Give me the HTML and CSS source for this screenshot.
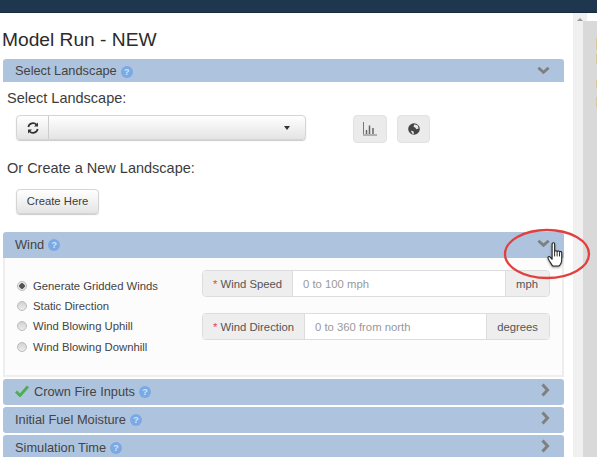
FILE: index.html
```html
<!DOCTYPE html>
<html lang="en">
<head>
    <meta charset="UTF-8">
    <title>Model Run - NEW</title>
    <link rel="stylesheet" href="styles.css">
</head>
<body>
    <div class="topbar"></div>
    <div class="layout">
        <main class="content">
            <h1>Model Run - NEW</h1>

            <div class="panel-head first">
                <span class="panel-title">Select Landscape <span class="help">?</span></span>
                <svg class="chev" width="13" height="9" viewBox="0 0 14 9"><path d="M1.500 1.500 7 6.500l5.500-5" fill="none" stroke="#7f7f7f" stroke-width="3"/></svg>
            </div>
            <div class="landscape">
                <p class="label">Select Landscape:</p>
                <div class="picker-row">
                    <div class="picker">
                        <span class="picker-refresh">
                            <svg width="12" height="12" viewBox="0 0 12 12"><path d="M1.300 5A4.800 4.800 0 0 1 9.600 2.800M10.700 7A4.800 4.800 0 0 1 2.400 9.200" fill="none" stroke="#333" stroke-width="1.700"/><path d="M11 .6V4.600H7ZM1 11.400V7.400H5Z" fill="#333"/></svg>
                        </span>
                        <span class="picker-select"><i class="caret"></i></span>
                    </div>
                    <span class="icon-btn chart-btn">
                        <svg width="14" height="14" viewBox="0 0 14 14"><path d="M.5 0V12M0 13H14" fill="none" stroke="#777" stroke-width="1"/><path d="M3.500 8V12M6.500 3.500V12M10 6V12" fill="none" stroke="#666" stroke-width="1.500"/></svg>
                    </span>
                    <span class="icon-btn globe-btn">
                        <svg width="12" height="12" viewBox="0 0 12 12"><circle cx="6" cy="6" r="5.800" fill="#444"/><path d="M6.500 1.200 9.800 2.600 10.600 5.400 8.600 6.200 7 4.400 5.400 3.600ZM2.800 7.600 5.600 8.400 6 11 4.200 10.400Z" fill="#e8e8e8"/></svg>
                    </span>
                </div>
                <p class="label second">Or Create a New Landscape:</p>
                <span class="btn">Create Here</span>
            </div>

            <div class="panel-head wind-head">
                <span class="panel-title">Wind <span class="help">?</span></span>
                <svg class="chev" width="13" height="9" viewBox="0 0 14 9"><path d="M1.500 1.500 7 6.500l5.500-5" fill="none" stroke="#7f7f7f" stroke-width="3"/></svg>
            </div>
            <div class="wind-body">
                <ul class="radios">
                    <li><i class="radio on"></i>Generate Gridded Winds</li>
                    <li><i class="radio"></i>Static Direction</li>
                    <li><i class="radio"></i>Wind Blowing Uphill</li>
                    <li><i class="radio"></i>Wind Blowing Downhill</li>
                </ul>
                <div class="fields">
                    <div class="field">
                        <span class="addon name speed"><b>*</b> Wind Speed</span>
                        <span class="value">0 to 100 mph</span>
                        <span class="addon unit">mph</span>
                    </div>
                    <div class="field">
                        <span class="addon name"><b>*</b> Wind Direction</span>
                        <span class="value">0 to 360 from north</span>
                        <span class="addon unit">degrees</span>
                    </div>
                </div>
            </div>

            <div class="panel-head closed">
                <span class="panel-title">
                    <svg class="check" width="14" height="12" viewBox="0 0 14 12"><path d="M1 6.500 5 10.500 13 1.500" fill="none" stroke="#4cae4c" stroke-width="2.800"/></svg>
                    Crown Fire Inputs <span class="help">?</span>
                </span>
                <svg class="chev" width="9" height="14" viewBox="0 0 9 14"><path d="M1.500 1.500 6.500 7l-5 5.500" fill="none" stroke="#7f7f7f" stroke-width="3"/></svg>
            </div>
            <div class="panel-head closed">
                <span class="panel-title">Initial Fuel Moisture <span class="help">?</span></span>
                <svg class="chev" width="9" height="14" viewBox="0 0 9 14"><path d="M1.500 1.500 6.500 7l-5 5.500" fill="none" stroke="#7f7f7f" stroke-width="3"/></svg>
            </div>
            <div class="panel-head closed">
                <span class="panel-title">Simulation Time <span class="help">?</span></span>
                <svg class="chev" width="9" height="14" viewBox="0 0 9 14"><path d="M1.500 1.500 6.500 7l-5 5.500" fill="none" stroke="#7f7f7f" stroke-width="3"/></svg>
            </div>
        </main>

        <div class="scrollbar"><i class="scroll-up"></i></div>
        <aside class="side">
            <i class="tab t1"></i>
            <i class="tab t2"></i>
            <i class="tab t3"></i>
            <i class="tab t4"></i>
        </aside>
    </div>

    <!-- annotation drawn over the screenshot -->
    <svg class="ring" width="92" height="56" viewBox="0 0 92 56"><ellipse cx="46" cy="28" rx="42" ry="24" fill="none" stroke="#e2403f" stroke-width="2.300"/></svg>
    <svg class="hand" width="18" height="25" viewBox="0 0 17 26"><path d="M5.500 2c0-1.600 2.600-1.600 2.600 0v8c.4-1.400 2.600-1.300 2.600.2.400-1.200 2.500-1 2.500.4.500-1 2.300-.8 2.300.7v6.700c0 3.500-1.700 6-3 7H6c-1-1.800-4-6-4.700-8-.5-1.500 1.200-2.500 2.200-1.300l2 2.300z" fill="#fff" stroke="#222" stroke-width="1.100" stroke-linejoin="round"/><path d="M8.100 10v5M10.700 10.500v4.500M13.200 11v4" stroke="#222" stroke-width="1"/></svg>
</body>
</html>
```

FILE: styles.css
```css
* {
    box-sizing: border-box;
}

body {
    position: relative;
    margin: 0;
    height: 457px;
    overflow: hidden;
    font-family: "Liberation Sans", Arial, sans-serif;
    color: #3c3c3c;
    background-color: #fff;
}

.topbar {
    height: 13px;
    background-color: #1f364f;
    border-bottom: 1px solid #16293d;
}

.layout {
    display: flex;
    height: 444px;
}

.content {
    width: 573px;
    padding: 0 9px 0 3px;
    overflow: hidden;
}

h1 {
    margin: 0 0 0 -1px;
    height: 46px;
    padding-top: 16px;
    font-size: 19.200px;
    line-height: 22px;
    font-weight: normal;
    color: #2b2b2b;
}

.panel-head {
    display: flex;
    align-items: center;
    justify-content: space-between;
    height: 26px;
    padding: 0 14px 0 12px;
    background-color: #aec3dd;
    border-radius: 3px 3px 0 0;
    font-size: 12.800px;
    color: #444;
}

.panel-head.first {
    height: 23px;
}

.panel-head.wind-head {
    padding-bottom: 2px;
}

.panel-head.closed {
    margin-bottom: 2px;
    padding-bottom: 2px;
    border-radius: 3px;
}

.wind-head .chev,
.closed .chev {
    margin-top: -2px;
}

.panel-title {
    display: flex;
    align-items: center;
    gap: 4px;
}

.help {
    display: inline-block;
    width: 12px;
    height: 12px;
    margin-top: 2px;
    border-radius: 50%;
    background-color: #7aaae6;
    color: #d5e3f5;
    font-size: 9px;
    font-weight: bold;
    line-height: 12px;
    text-align: center;
}

.check {
    margin-right: 1px;
}

.landscape {
    height: 150px;
    padding: 7px 0 0 4px;
}

.label {
    margin: 0;
    font-size: 14.500px;
    line-height: 18px;
}

.label.second {
    margin-top: 16px;
}

.picker-row {
    display: flex;
    align-items: flex-start;
    margin: 8px 0 0 9px;
}

.picker {
    display: flex;
    width: 290px;
    height: 25px;
    border: 1px solid #d4d4d4;
    border-radius: 4px;
    background: linear-gradient(#fff, #e4e4e4);
    box-shadow: 0 1px 1px #ccc;
}

.picker-refresh {
    display: flex;
    align-items: center;
    justify-content: center;
    width: 32px;
    border-right: 1px solid #ccc;
}

.picker-select {
    display: flex;
    flex: 1;
    align-items: center;
    justify-content: flex-end;
    padding-right: 15px;
}

.caret {
    border-top: 4px solid #333;
    border-left: 3px solid transparent;
    border-right: 3px solid transparent;
}

.icon-btn {
    display: flex;
    align-items: center;
    justify-content: center;
    height: 28px;
    border: 1px solid #e2e2e2;
    border-radius: 4px;
    background-color: #ebebeb;
}

.chart-btn {
    width: 34px;
    margin-left: 47px;
}

.globe-btn {
    width: 33px;
    margin-left: 10px;
}

.btn {
    display: block;
    width: 83px;
    height: 25px;
    margin: 12px 0 0 9px;
    border: 1px solid #d4d4d4;
    border-radius: 4px;
    background: linear-gradient(#fff, #e4e4e4);
    box-shadow: 0 1px 1px #ccc;
    font-size: 11.300px;
    line-height: 23px;
    text-align: center;
}

.wind-body {
    display: flex;
    justify-content: space-between;
    height: 119px;
    margin-bottom: 2px;
    padding: 12px 12px 0 12px;
    background-color: #fcfcfc;
    border: 2px solid #eee;
    border-top: 0;
}

.radios {
    margin: 6px 0 0;
    padding: 0;
    list-style: none;
    font-size: 11.300px;
    color: #444;
}

.radios li {
    display: flex;
    align-items: center;
    gap: 6px;
    height: 20.200px;
}

.radio {
    width: 10px;
    height: 10px;
    border: 1px solid #bbb;
    border-radius: 50%;
    background: linear-gradient(#d2d2d2, #ececec);
}

.radio.on {
    background: radial-gradient(circle, #555 0 2.500px, #e8e8e8 3px);
}

.fields {
    display: flex;
    flex-direction: column;
    gap: 16px;
    width: 348px;
}

.field {
    display: flex;
    height: 27px;
    border: 1px solid #ddd;
    border-radius: 4px;
    overflow: hidden;
    font-size: 11.300px;
    line-height: 26px;
}

.addon {
    background-color: #eee;
    color: #555;
    white-space: nowrap;
}

.addon b {
    color: #e8474a;
    font-weight: normal;
}

.name {
    width: 102px;
    padding-left: 10px;
    border-right: 1px solid #ddd;
}

.name.speed {
    width: 90px;
}

.value {
    flex: 1;
    padding-left: 10px;
    background-color: #fff;
    color: #999;
}

.unit {
    padding: 0 11px 0 10px;
    border-left: 1px solid #ddd;
}

.scrollbar {
    width: 14px;
    background-color: #f0f0f0;
}

.scroll-up {
    display: block;
    width: 0;
    margin: 5px 0 0 4px;
    border-bottom: 3px solid #999;
    border-left: 3px solid transparent;
    border-right: 3px solid transparent;
}

.side {
    position: relative;
    flex: 1;
    margin: 8px 0 0 -4px;
    background-color: #d9d9d9;
}

.tab {
    position: absolute;
    right: 0;
    width: 1px;
    background-color: #d8c79a;
}

.t1 { top: 17px; height: 11px; }
.t2 { top: 33px; height: 10px; }
.t3 { top: 59px; height: 8px; }
.t4 { top: 76px; height: 10px; }

.ring {
    position: absolute;
    left: 501px;
    top: 226px;
}

.hand {
    position: absolute;
    left: 546px;
    top: 242px;
    filter: drop-shadow(0 1px 1px rgba(0, 0, 0, 0.4));
}
```
